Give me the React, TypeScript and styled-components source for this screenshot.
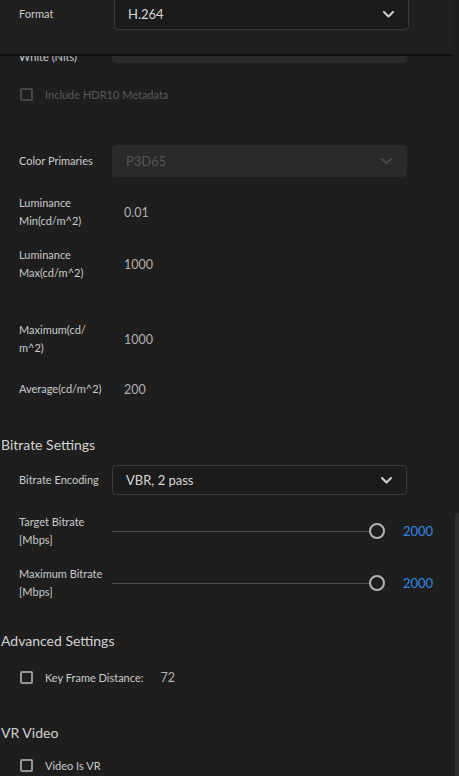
import styled, { createGlobalStyle } from 'styled-components';

const GlobalStyle = createGlobalStyle`
  html, body {
    margin: 0;
    padding: 0;
    background: #1e1e1e;
  }
  body {
    font-family: Lato, "Open Sans", sans-serif;
    color: #c8c8c8;
    overflow: hidden;
  }
`;

const Page = styled.div`
  width: 459px;
  height: 776px;
  display: flex;
  flex-direction: column;
  background: #1e1e1e;
  overflow: hidden;
`;

const Header = styled.div`
  height: 54px;
  flex-shrink: 0;
  background: #202020;
  border-bottom: 2px solid #101010;
  margin-right: 6px;
  overflow: hidden;
`;

const Body = styled.div`
  flex: 1;
  display: flex;
  min-height: 0;
`;

const Viewport = styled.div`
  flex: 1;
  overflow: hidden;
  display: flex;
  flex-direction: column;
`;

const Track = styled.div`
  width: 6px;
  flex-shrink: 0;
  display: flex;
  flex-direction: column;
  align-items: flex-end;
`;

const Thumb = styled.div`
  margin-top: 457px;
  width: 4px;
  flex: 1;
  background: #2e2e2e;
  border-radius: 3px 0 0 0;
`;

const Row = styled.div<{ $mt: number; $h: number; $pl?: number }>`
  display: flex;
  align-items: center;
  flex-shrink: 0;
  margin-top: ${(p) => p.$mt}px;
  height: ${(p) => p.$h}px;
  padding-left: ${(p) => p.$pl ?? 19}px;
`;

const Label = styled.div<{ $w?: number; $shift?: number }>`
  width: ${(p) => p.$w ?? 93}px;
  flex-shrink: 0;
  margin-top: ${(p) => p.$shift ?? 0}px;
  font-size: 11px;
  line-height: 18px;
  color: #cbcbcb;
  white-space: nowrap;
`;

const Value = styled.div`
  padding-left: 12px;
  font-size: 12.5px;
  color: #b0b0b0;
`;

const SelectBox = styled.div<{ $disabled?: boolean }>`
  width: 295px;
  height: 100%;
  box-sizing: border-box;
  display: flex;
  align-items: center;
  justify-content: space-between;
  padding: 0 14px 0 13px;
  border-radius: 4px;
  font-size: 13px;
  background: ${(p) => (p.$disabled ? '#2a2a2a' : '#1b1b1b')};
  border: 1px solid ${(p) => (p.$disabled ? '#2a2a2a' : '#3a3a3a')};
  color: ${(p) => (p.$disabled ? '#555555' : '#d6d6d6')};
`;

const Chevron = ({ color }: { color: string }) => (
  <svg width="11" height="7" viewBox="0 0 11 7">
    <polyline points="1,1 5.5,5.5 10,1" fill="none" stroke={color} strokeWidth="2" strokeLinecap="round" strokeLinejoin="round" />
  </svg>
);

const CheckWrap = styled.label<{ $disabled?: boolean }>`
  display: flex;
  align-items: center;
  padding-left: 20px;
  font-size: 11px;
  color: ${(p) => (p.$disabled ? '#5a5a5a' : '#cbcbcb')};
`;

const Box = styled.span<{ $disabled?: boolean }>`
  width: 13px;
  height: 13px;
  box-sizing: border-box;
  border: 2px solid ${(p) => (p.$disabled ? '#484848' : '#979797')};
  border-radius: 2px;
  margin-right: 12px;
`;

const Inline = styled.span`
  margin-left: 17px;
  font-size: 12.5px;
  color: #b0b0b0;
`;

const Heading = styled.div<{ $mt: number }>`
  margin-top: ${(p) => p.$mt}px;
  height: 20px;
  flex-shrink: 0;
  display: flex;
  align-items: center;
  padding-left: 1px;
  font-size: 14px;
  color: #d2d2d2;
`;

const Slider = styled.div`
  width: 273px;
  display: flex;
  align-items: center;
`;

const SliderTrack = styled.div`
  flex: 1;
  height: 1px;
  background: #4e4e4e;
`;

const SliderKnob = styled.div`
  width: 16px;
  height: 16px;
  box-sizing: border-box;
  border: 2px solid #b4b4b4;
  border-radius: 50%;
`;

const BlueValue = styled.div`
  margin-left: 18px;
  font-size: 13px;
  color: #3487e4;
`;

function App() {
  return (
    <Page>
      <GlobalStyle />
      <Header>
        <Row $mt={-2} $h={32}>
          <Label $w={95}>Format</Label>
          <SelectBox>
            H.264
            <Chevron color="#d0d0d0" />
          </SelectBox>
        </Row>
      </Header>
      <Body>
        <Viewport>
          <Row $mt={-25} $h={32}>
            <Label $shift={2}>
              Reference
              <br />
              White (Nits)
            </Label>
            <SelectBox $disabled />
          </Row>
          <Row $mt={21} $h={20} $pl={0}>
            <CheckWrap $disabled>
              <Box $disabled />
              Include HDR10 Metadata
            </CheckWrap>
          </Row>
          <Row $mt={41} $h={32}>
            <Label>Color Primaries</Label>
            <SelectBox $disabled>
              P3D65
              <Chevron color="#4a4a4a" />
            </SelectBox>
          </Row>
          <Row $mt={17} $h={36}>
            <Label>
              Luminance
              <br />
              Min(cd/m^2)
            </Label>
            <Value>0.01</Value>
          </Row>
          <Row $mt={16} $h={36}>
            <Label>
              Luminance
              <br />
              Max(cd/m^2)
            </Label>
            <Value>1000</Value>
          </Row>
          <Row $mt={39} $h={36}>
            <Label>
              Maximum(cd/
              <br />
              m^2)
            </Label>
            <Value>1000</Value>
          </Row>
          <Row $mt={22} $h={20}>
            <Label>Average(cd/m^2)</Label>
            <Value>200</Value>
          </Row>
          <Heading $mt={35}>Bitrate Settings</Heading>
          <Row $mt={11} $h={30}>
            <Label>Bitrate Encoding</Label>
            <SelectBox>
              VBR, 2 pass
              <Chevron color="#d0d0d0" />
            </SelectBox>
          </Row>
          <Row $mt={18} $h={36}>
            <Label>
              Target Bitrate
              <br />
              [Mbps]
            </Label>
            <Slider>
              <SliderTrack />
              <SliderKnob />
            </Slider>
            <BlueValue>2000</BlueValue>
          </Row>
          <Row $mt={16} $h={36}>
            <Label>
              Maximum Bitrate
              <br />
              [Mbps]
            </Label>
            <Slider>
              <SliderTrack />
              <SliderKnob />
            </Slider>
            <BlueValue>2000</BlueValue>
          </Row>
          <Heading $mt={29}>Advanced Settings</Heading>
          <Row $mt={17} $h={20} $pl={0}>
            <CheckWrap>
              <Box />
              Key Frame Distance:
              <Inline>72</Inline>
            </CheckWrap>
          </Row>
          <Heading $mt={35}>VR Video</Heading>
          <Row $mt={13} $h={20} $pl={0}>
            <CheckWrap>
              <Box />
              Video Is VR
            </CheckWrap>
          </Row>
        </Viewport>
        <Track>
          <Thumb />
        </Track>
      </Body>
    </Page>
  );
}

export default App;
